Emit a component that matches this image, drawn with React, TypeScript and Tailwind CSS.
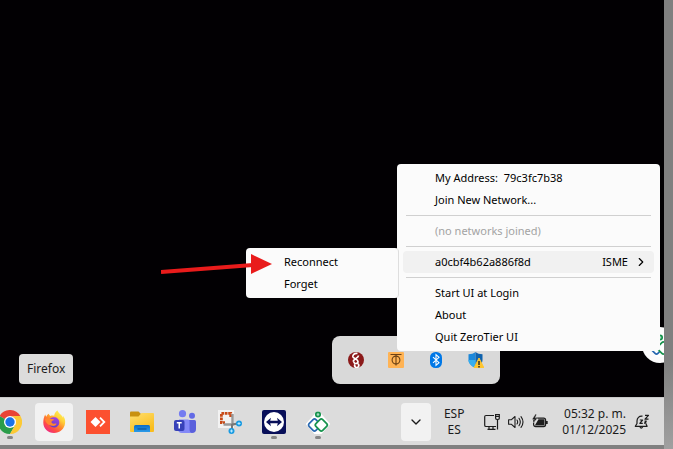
import React from 'react';
import { ChevronDown, ChevronRight } from 'lucide-react';

interface MenuItemProps {
  label: string;
  disabled?: boolean;
}

function MenuItem({ label, disabled }: MenuItemProps) {
  return (
    <button
      disabled={disabled}
      className="flex h-[22px] w-full items-center rounded-sm pl-8 text-left whitespace-pre hover:bg-[#f0f0f0] disabled:text-[#a3a3a3]"
    >
      {label}
    </button>
  );
}

function Separator() {
  return <hr className="mx-[3px] my-1 border-[#d0d0d0]" />;
}

function ChromeIcon() {
  return (
    <svg viewBox="0 0 24 24" className="h-6 w-6">
      <path d="M12 12 1.6 6A12 12 0 0 1 22.4 6z" fill="#ea4335" />
      <path d="M1.6 6A12 12 0 0 0 12 24l5.2-9L12 12z" fill="#2a9d4a" />
      <path d="M22.4 6A12 12 0 0 1 12 24l5.2-9A6 6 0 0 0 12 6z" fill="#fcc934" />
      <circle cx="12" cy="12" r="6" fill="#fff" />
      <circle cx="12" cy="12" r="4.7" fill="#1a73e8" />
    </svg>
  );
}

function FirefoxIcon() {
  return (
    <svg viewBox="0 0 24 24" className="h-6 w-6">
      <defs>
        <linearGradient id="fox" x1="0.85" y1="0.05" x2="0.2" y2="0.9">
          <stop offset="0" stopColor="#fff25a" />
          <stop offset="0.3" stopColor="#ffd23a" />
          <stop offset="0.55" stopColor="#ff8a2c" />
          <stop offset="0.8" stopColor="#ff4a45" />
          <stop offset="1" stopColor="#f0307a" />
        </linearGradient>
        <linearGradient id="globe" x1="0.8" y1="0" x2="0.3" y2="1">
          <stop offset="0" stopColor="#a844e0" />
          <stop offset="1" stopColor="#5c3cc8" />
        </linearGradient>
      </defs>
      <path
        d="M15.5.5c1 3.200 4.600 4.300 5.600 7.400.1-.8 0-1.600-.3-2.300 1.900 2.200 2.700 4.800 2.300 7.700C22.300 19.300 17.700 23 12 23 5.900 23 1.300 18.500 1.300 12.700c0-3 .5-5.700 1.900-8.200.2 1 .6 1.700 1.200 2.200C4.800 5.300 5.600 4.300 6.900 3.700c.1 1 .7 1.700 1.500 2.200 1.300-.6 2.500-.5 3.800-.2.3-2.200 1.300-4.200 3.300-5.200z"
        fill="url(#fox)"
      />
      <path d="M10 7.600c3.500-1.500 7.300.8 7.300 4.600 0 3.200-2.400 5.300-5.300 5.300S6.600 15.300 6.600 12.300c0-2 1.300-4 3.400-4.700z" fill="url(#globe)" />
      <path d="M3 9c2.300-1.500 4.200-1.100 6 0 1.300-.3 2.900 0 3.600 1.100-1.400.2-2.500.6-3 1.500-.5 1.500.8 2.400 2.500 2.200 1.100-.1 1.700-.5 2.500-.1-.8 1.700-2.600 2.500-4.600 2.100C6.500 15.300 3.500 13 3 9z" fill="#ff8630" />
    </svg>
  );
}

function AnyDeskIcon() {
  return (
    <svg viewBox="0 0 24 24" className="h-6 w-6">
      <path d="M0 0h24v24H0z" fill="#fc502f" />
      <path d="m9.500 7 5 5-5 5-5-5z" fill="#fff" />
      <path d="m14 7.700 4.300 4.300-4.300 4.300" fill="none" stroke="#fff" strokeWidth="1.800" />
    </svg>
  );
}

function ExplorerIcon() {
  return (
    <svg viewBox="0 0 24 24" className="h-6 w-6">
      <defs>
        <linearGradient id="folder" x1="0" y1="0" x2="0.6" y2="1">
          <stop offset="0" stopColor="#ffdf70" />
          <stop offset="1" stopColor="#f9bd1d" />
        </linearGradient>
        <linearGradient id="dock" x1="0" y1="0" x2="0" y2="1">
          <stop offset="0" stopColor="#0b6cc8" />
          <stop offset="1" stopColor="#2b9be8" />
        </linearGradient>
      </defs>
      <path d="M0 2.500Q0 1.500 1 1.500h7.500L11 4v4H0z" fill="#c99110" />
      <path d="M0 6.500h8.500L11.500 3H23q1 0 1 1v17q0 1-1 1H1q-1 0-1-1z" fill="url(#folder)" />
      <path d="M4 22v-5.500Q4 15 5.500 15h13q1.500 0 1.500 1.500V22z" fill="url(#dock)" />
      <path d="M7.500 19h9" stroke="#0a559f" strokeWidth="1.200" />
    </svg>
  );
}

function TeamsIcon() {
  return (
    <svg viewBox="0 0 24 24" className="h-6 w-6">
      <circle cx="8.500" cy="3.700" r="3.600" fill="#747cf0" />
      <circle cx="18" cy="5.700" r="3" fill="#626ae6" />
      <path d="M13.500 10h7q1.500 0 1.500 1.500V19q0 4-4 4h-4.500z" fill="#5a60dc" />
      <path d="M5 9.500h9q1.500 0 1.500 1.500v8q0 4 3 4H8q-4 0-4-4z" fill="#8489f7" />
      <rect y="10" width="10.500" height="11" rx="2" fill="#3741b8" />
      <path d="M2.800 12.800h4.900M5.250 12.800v5.700" stroke="#fff" strokeWidth="1.500" />
    </svg>
  );
}

function SnippingIcon() {
  return (
    <svg viewBox="0 0 24 24" className="h-6 w-6">
      <path d="M0 0h16v18H0z" fill="#f2f2f2" />
      <path d="M12.700 7V3.400H3.400v9.300H7" fill="none" stroke="#c84a17" strokeWidth="2.800" strokeDasharray="2.700 .7" />
      <path d="M14.500 4v11.300M5.500 14.500h10.300" stroke="#999" strokeWidth="2.400" />
      <path d="M14 14v6M14 14.500l6-1" stroke="#777" strokeWidth="2" />
      <circle cx="21" cy="13.500" r="3" fill="#199be2" />
      <circle cx="13.500" cy="21" r="3" fill="#199be2" />
      <path d="M19.500 13.500h3M21 12v3M12 21h3M13.500 19.500v3" stroke="#b8e8ff" strokeWidth="1" />
    </svg>
  );
}

function TeamViewerIcon() {
  return (
    <svg viewBox="0 0 24 24" className="h-6 w-6">
      <rect width="24" height="24" rx="2" fill="#080f59" />
      <circle cx="12" cy="12" r="10" fill="#fff" />
      <path d="m4 12 5-4.200-.8 3h7.600l-.8-3L20 12l-5 4.200.8-3H8.200l.8 3z" fill="#080f59" />
    </svg>
  );
}

function DiamondsIcon() {
  return (
    <svg viewBox="0 0 24 24" className="h-6 w-6">
      <path d="M12 2 23 14l-8 9H9L1 14z" fill="#fff" stroke="#fff" strokeWidth="2" strokeLinejoin="round" />
      <circle cx="12" cy="4.500" r="2.200" fill="#a8dcc0" stroke="#16934d" strokeWidth="1.700" />
      <rect x="3.700" y="10.200" width="9.600" height="9.600" rx="2" transform="rotate(45 8.500 15)" fill="none" stroke="#2868b0" strokeWidth="1.700" />
      <rect x="10.500" y="10.200" width="9.600" height="9.600" rx="2" transform="rotate(45 15.300 15)" fill="#fff" stroke="#16934d" strokeWidth="1.700" />
    </svg>
  );
}

const taskbarApps = [
  { name: 'Chrome', icon: <ChromeIcon />, running: true },
  { name: 'Firefox', icon: <FirefoxIcon />, hovered: true },
  { name: 'AnyDesk', icon: <AnyDeskIcon /> },
  { name: 'File Explorer', icon: <ExplorerIcon /> },
  { name: 'Teams', icon: <TeamsIcon /> },
  { name: 'Snipping Tool', icon: <SnippingIcon /> },
  { name: 'TeamViewer', icon: <TeamViewerIcon />, running: true },
  { name: 'ISME', icon: <DiamondsIcon />, running: true },
];

const trayApps = [
  {
    name: 'Wireguard',
    icon: (
      <svg viewBox="0 0 16 16" className="h-4 w-4">
        <circle cx="8" cy="8" r="8" fill="#8b1a1a" />
        <path d="M9.500 1.500C6 1 4.500 3 5 5c.5 1.700 5 2 5 4.500 0 1.300-1 2-2 2S5.700 11 6 9.500M10.500 3.500C10.500 6 6 6.500 5 9.500M7 12.500a2 2 0 1 0 3-.5" fill="none" stroke="#fff" strokeWidth="1.700" />
      </svg>
    ),
  },
  {
    name: 'ZeroTier',
    icon: (
      <svg viewBox="0 0 16 16" className="h-4 w-4">
        <rect width="16" height="16" rx="1" fill="#ffb354" />
        <path d="M2.500 2.500h11M8 2.500v11" stroke="#6b4115" strokeWidth="1.100" />
        <circle cx="8" cy="8" r="3.900" fill="none" stroke="#6b4115" strokeWidth="1.100" />
      </svg>
    ),
  },
  {
    name: 'Bluetooth',
    icon: (
      <svg viewBox="0 0 16 16" className="h-4 w-4">
        <rect x="2" width="12" height="16" rx="5.500" fill="#0078e7" />
        <path d="m5 5.200 6 5.500-3 2.600V2.700l3 2.600-6 5.500" fill="none" stroke="#fff" strokeWidth="1.100" />
      </svg>
    ),
  },
  {
    name: 'Windows Security',
    icon: (
      <svg viewBox="0 0 16 16" className="h-4 w-4">
        <path d="M7.500 0C5.500 1.600 3.500 2.200.5 2.300V8c0 3.500 3 6 7 8z" fill="#1c88d9" />
        <path d="M7.500 0c2 1.600 4 2.200 7 2.300V8c0 3.500-3 6-7 8z" fill="#0f62ad" />
        <path d="M.5 8h7v8c-4-2-7-4.500-7-8z" fill="#35aef0" />
        <path d="m11 6 5 10H6z" fill="#ffc52e" stroke="#ffc52e" strokeLinejoin="round" />
        <path d="M11 9v4M11 14v1.500" stroke="#222" strokeWidth="1.400" />
      </svg>
    ),
  },
];

function NetworkIcon() {
  return (
    <svg viewBox="0 0 16 16" className="h-4 w-4" fill="none" stroke="#1c1c1c" strokeWidth="1.200">
      <path d="M10 1.500H2Q.7 1.500.7 2.800v8.400q0 1.300 1.300 1.300h10M5 12.500v3M9 12.500v3M3.500 15.400h8" />
      <path d="M11.600.7h3.700v3.500q0 1.300-1.800 1.300t-1.900-1.300zM11.600 2.500h3.700M13.500 5.500v10" />
    </svg>
  );
}

function VolumeIcon() {
  return (
    <svg viewBox="0 0 16 16" className="h-4 w-4" fill="none" stroke="#1c1c1c" strokeWidth="1.100" strokeLinecap="round" strokeLinejoin="round">
      <path d="M.6 5.800h2.600L7 2.500v11l-3.800-3.300H.6z" />
      <path d="M9 6q1.300 2 0 4M11 4.300q2.600 3.700 0 7.400M13 2.600q4 5.400 0 10.800" />
    </svg>
  );
}

function BatteryIcon() {
  return (
    <svg viewBox="0 0 16 16" className="h-4 w-4">
      <rect x="1.600" y="4.100" width="12" height="8.500" rx="2" fill="none" stroke="#1c1c1c" strokeWidth="1.200" />
      <path d="M2.800 11.500 6.500 5.300H12.500v6.200zM14 7h1.700v3H14z" fill="#1c1c1c" />
      <path d="M3.500 0 0 5.500h2.200L1.500 9 5.500 4H3.200L4.500.5z" fill="#1c1c1c" stroke="#dcdcdc" strokeWidth=".4" />
    </svg>
  );
}

function BellIcon() {
  return (
    <svg viewBox="0 0 16 16" className="h-4 w-4" fill="none" stroke="#1c1c1c" strokeWidth="1.200" strokeLinejoin="round">
      <path d="M8.500 2.200C5 1.800 3 4 3 7v2.500L1.300 12.300h11.800L12 10M5.800 12.500q1.400 3.300 3 0" />
      <path d="M5.800 6h2.800L5.800 9.400h3M11 1.300h3.500L11 5.200h3.500M10.500 7.200h1.800l-1.800 2h2" />
    </svg>
  );
}

export default function App() {
  return (
    <div className="flex min-h-screen flex-col bg-linear-to-b from-[#808080] from-80% to-[#a0a0a0] font-['Noto_Sans','Segoe_UI',sans-serif] text-xs text-[#1b1b1b]">
      <div className="mr-[9px] flex flex-1 flex-col overflow-hidden border-b-4 border-[#808080]">
        {/* Desktop */}
        <main className="relative flex-1 bg-[#020003]">
          <div role="tooltip" className="absolute bottom-[13px] left-[19px] flex h-[30px] items-center rounded bg-[#dcdcdc] px-2">
            Firefox
          </div>

          {/* Floating widget, half out of the screen */}
          <div className="absolute -right-3.5 bottom-[34px] flex h-9 w-9 items-center justify-center rounded-full bg-[#fbfbfb]">
            <DiamondsIcon />
          </div>

          {/* Hidden icons */}
          <div className="absolute right-[164px] bottom-[13px] flex h-12 items-center rounded-lg bg-[#d9d9d9] px-1">
            {trayApps.map((app) => (
              <button key={app.name} aria-label={app.name} className="flex h-10 w-10 items-center justify-center">
                {app.icon}
              </button>
            ))}
          </div>

          {/* ZeroTier menu */}
          <div className="absolute right-1 bottom-[46px] w-[263px] rounded bg-[#fbfbfb] px-1.5 py-[3px] text-[11px] text-black">
            <MenuItem label="My Address:  79c3fc7b38" />
            <MenuItem label="Join New Network..." />
            <Separator />
            <MenuItem label="(no networks joined)" disabled />
            <Separator />
            <button className="flex h-[22px] w-full items-center rounded-sm bg-[#f1f1f1] pr-1.5 pl-8">
              <span className="flex-1 text-left">a0cbf4b62a886f8d</span>
              <span>ISME</span>
              <ChevronRight className="ml-1.5 h-3.5 w-3.5" />
            </button>
            <Separator />
            <MenuItem label="Start UI at Login" />
            <MenuItem label="About" />
            <MenuItem label="Quit ZeroTier UI" />
          </div>

          {/* Network submenu */}
          <div className="absolute right-[265px] bottom-[99px] w-[153px] rounded border-r border-[#dedede] bg-[#fbfbfb] px-1.5 py-[3px] text-[11px] text-black">
            <MenuItem label="Reconnect" />
            <MenuItem label="Forget" />
          </div>

          <svg viewBox="0 0 112 22" className="absolute right-[391px] bottom-[122px] h-[22px] w-28">
            <path d="m0 19 92-7" stroke="#e91b1b" strokeWidth="4" />
            <path d="M90 1v20l21-10z" fill="#e91b1b" />
          </svg>
        </main>

        {/* Taskbar */}
        <footer className="flex h-12 items-center border-t border-[#c8c8c8] bg-[#dcdcdc]">
          <nav className="-ml-[9px] flex gap-1.5">
            {taskbarApps.map((app) => (
              <button
                key={app.name}
                aria-label={app.name}
                className={`relative flex h-[38px] w-[38px] items-center justify-center rounded ${app.hovered ? 'bg-[#f2f2f2]' : ''}`}
              >
                {app.icon}
                {app.running && <span className="absolute bottom-0.5 h-[3px] w-1.5 rounded-full bg-[#868686]" />}
              </button>
            ))}
          </nav>

          <div className="ml-auto flex items-center pr-3.5">
            <button aria-label="Show hidden icons" className="flex h-[38px] w-[30px] items-center justify-center rounded bg-[#f2f2f2]">
              <ChevronDown className="h-4 w-4" />
            </button>
            <button className="w-[46px] text-center leading-4">
              ESP
              <br />
              ES
            </button>
            <button aria-label="Network, volume and battery" className="ml-[7px] flex gap-2">
              <NetworkIcon />
              <VolumeIcon />
              <BatteryIcon />
            </button>
            <button className="ml-3.5 text-right leading-4">
              05:32 p. m.
              <br />
              01/12/2025
            </button>
            <button aria-label="Notifications" className="ml-2">
              <BellIcon />
            </button>
          </div>
        </footer>
      </div>
    </div>
  );
}
